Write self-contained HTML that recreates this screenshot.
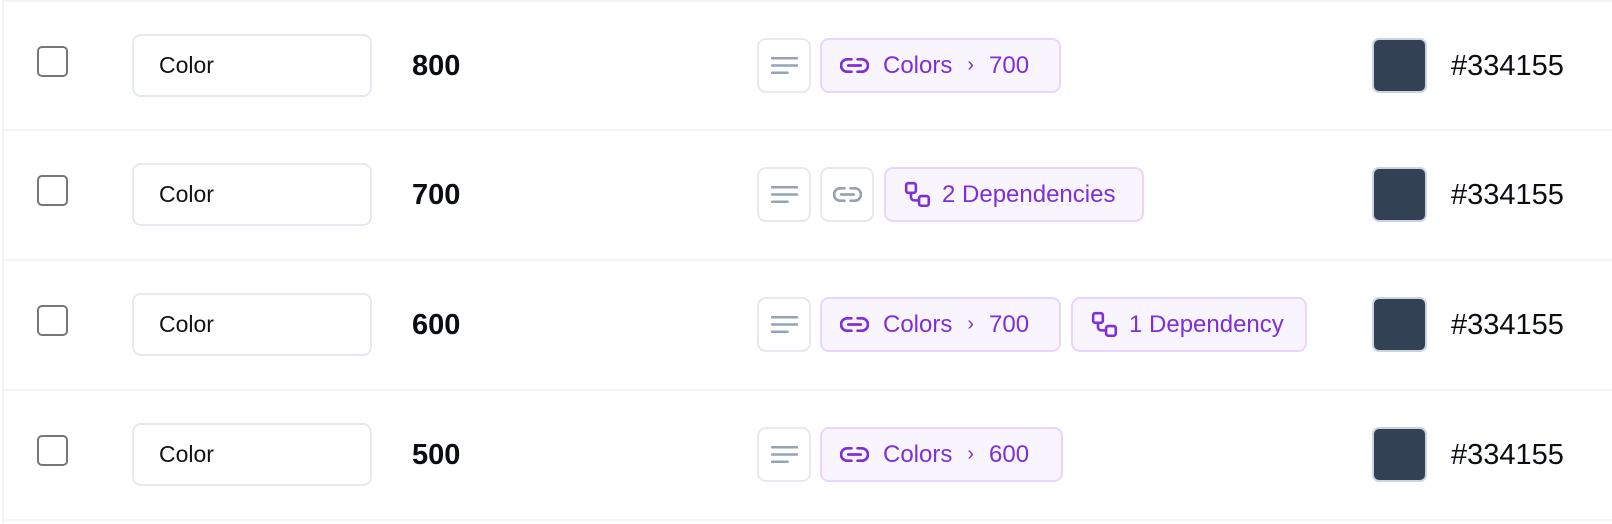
<!DOCTYPE html>
<html><head><style>
*{box-sizing:border-box;margin:0;padding:0}
body{width:1612px;height:524px;background:#fff;font-family:"Liberation Sans",Arial,sans-serif;position:relative;overflow:hidden}
.line{position:absolute;left:3px;right:0;height:2px;background:#f1f4f8}
.vl{position:absolute;left:2px;top:0;width:2px;height:524px;background:#f1f4f8}
.row{position:absolute;left:0;width:1612px;height:2px}
.cb{position:absolute;left:37px;top:-20px;width:31px;height:31px;border:2px solid #777;border-radius:5px}
.inp{position:absolute;left:132px;top:-32px;width:240px;height:63px;border:2px solid #e5e9f0;border-radius:9px;font-size:23px;line-height:59px;padding-left:25px;color:#111}
.num{position:absolute;left:412px;top:-18px;font-size:29px;line-height:36px;font-weight:600;color:#0b0d14}
.ib{position:absolute;top:-28px;width:54px;height:55px;border:2px solid #e5e9f0;border-radius:9px;display:flex;align-items:center;justify-content:center}
.chip{position:absolute;top:-28px;height:55px;border:2px solid #e9d5ff;background:#f9f5ff;border-radius:9px;display:flex;align-items:center;padding-left:18px;color:#7e2fd6;font-size:24px;white-space:nowrap}
.chip svg{margin-right:14px}
.gt{margin:0 15px;font-size:20px}
.sw{position:absolute;left:1372px;top:-28px;width:55px;height:55px;background:#334155;border:2px solid #cbd5e1;border-radius:7px}
.hex{position:absolute;left:1451px;top:-18px;font-size:29px;line-height:36px;color:#0b0d14}
</style></head><body>
<div class="vl"></div>
<div class="line" style="top:0"></div>
<div class="line" style="top:129px"></div>
<div class="line" style="top:259px"></div>
<div class="line" style="top:389px"></div>
<div class="line" style="top:519px"></div>

<svg width="0" height="0" style="position:absolute"><defs>
<symbol id="lines" viewBox="0 0 26 20"><path d="M1 3h24M1 10h24M1 17h15" stroke="#94a3b8" stroke-width="2.4" stroke-linecap="round" fill="none"/></symbol>
<symbol id="link" viewBox="0 0 28 18"><path d="M11 3H7a6 6 0 0 0 0 12h4M17 3h4a6 6 0 0 1 0 12h-4M8 9h12" stroke="currentColor" stroke-width="2.6" stroke-linecap="round" fill="none"/></symbol>
<symbol id="dep" viewBox="0 0 26 26"><rect x="2" y="2" width="9" height="9" rx="2" fill="none" stroke="currentColor" stroke-width="2.4"/><rect x="14" y="14" width="9" height="9" rx="2" fill="none" stroke="currentColor" stroke-width="2.4"/><path d="M6.5 11v4a3 3 0 0 0 3 3h4.5" fill="none" stroke="currentColor" stroke-width="2.4"/></symbol>
</defs></svg>

<div class="row" style="top:66px">
<div class="cb"></div><div class="inp">Color</div><div class="num">800</div>
<div class="ib" style="left:757px"><svg width="27" height="21"><use href="#lines"/></svg></div>
<div class="chip" style="left:820px;width:241px"><svg width="29" height="19"><use href="#link"/></svg>Colors<span class="gt">›</span>700</div>
<div class="sw"></div><div class="hex">#334155</div>
</div>

<div class="row" style="top:195px">
<div class="cb"></div><div class="inp">Color</div><div class="num">700</div>
<div class="ib" style="left:757px"><svg width="27" height="21"><use href="#lines"/></svg></div>
<div class="ib" style="left:820px;color:#94a3b8"><svg width="29" height="19"><use href="#link"/></svg></div>
<div class="chip" style="left:884px;width:260px"><svg width="28" height="28" style="margin-right:10px"><use href="#dep"/></svg>2 Dependencies</div>
<div class="sw"></div><div class="hex">#334155</div>
</div>

<div class="row" style="top:325px">
<div class="cb"></div><div class="inp">Color</div><div class="num">600</div>
<div class="ib" style="left:757px"><svg width="27" height="21"><use href="#lines"/></svg></div>
<div class="chip" style="left:820px;width:241px"><svg width="29" height="19"><use href="#link"/></svg>Colors<span class="gt">›</span>700</div>
<div class="chip" style="left:1071px;width:236px"><svg width="28" height="28" style="margin-right:10px"><use href="#dep"/></svg>1 Dependency</div>
<div class="sw"></div><div class="hex">#334155</div>
</div>

<div class="row" style="top:455px">
<div class="cb"></div><div class="inp">Color</div><div class="num">500</div>
<div class="ib" style="left:757px"><svg width="27" height="21"><use href="#lines"/></svg></div>
<div class="chip" style="left:820px;width:243px"><svg width="29" height="19"><use href="#link"/></svg>Colors<span class="gt">›</span>600</div>
<div class="sw"></div><div class="hex">#334155</div>
</div>
</body></html>
